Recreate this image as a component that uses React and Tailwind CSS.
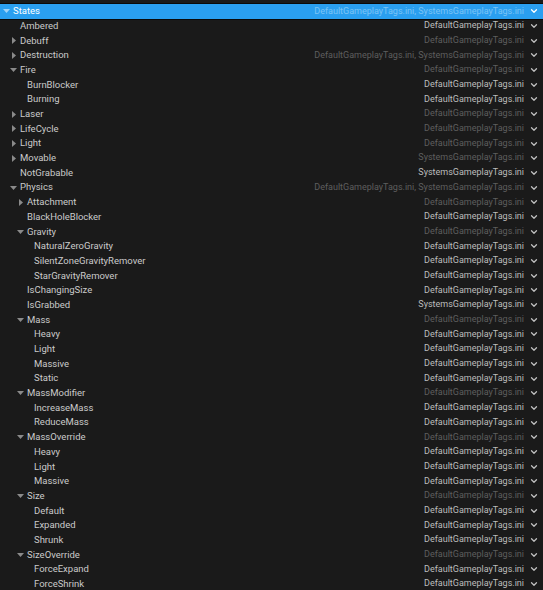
import { ChevronDown } from 'lucide-react';

const D = 'DefaultGameplayTags.ini';
const S = 'SystemsGameplayTags.ini';
const DS = 'DefaultGameplayTags.ini, SystemsGameplayTags.ini';

// [level, name, source, state] state: 'open' | 'closed' | null
const rows = [
  [0, 'States', DS, 'open'],
  [1, 'Ambered', D, null],
  [1, 'Debuff', D, 'closed'],
  [1, 'Destruction', DS, 'closed'],
  [1, 'Fire', D, 'open'],
  [2, 'BurnBlocker', D, null],
  [2, 'Burning', D, null],
  [1, 'Laser', D, 'closed'],
  [1, 'LifeCycle', D, 'closed'],
  [1, 'Light', D, 'closed'],
  [1, 'Movable', S, 'closed'],
  [1, 'NotGrabable', S, null],
  [1, 'Physics', DS, 'open'],
  [2, 'Attachment', D, 'closed'],
  [2, 'BlackHoleBlocker', D, null],
  [2, 'Gravity', D, 'open'],
  [3, 'NaturalZeroGravity', D, null],
  [3, 'SilentZoneGravityRemover', D, null],
  [3, 'StarGravityRemover', D, null],
  [2, 'IsChangingSize', D, null],
  [2, 'IsGrabbed', S, null],
  [2, 'Mass', D, 'open'],
  [3, 'Heavy', D, null],
  [3, 'Light', D, null],
  [3, 'Massive', D, null],
  [3, 'Static', D, null],
  [2, 'MassModifier', D, 'open'],
  [3, 'IncreaseMass', D, null],
  [3, 'ReduceMass', D, null],
  [2, 'MassOverride', D, 'open'],
  [3, 'Heavy', D, null],
  [3, 'Light', D, null],
  [3, 'Massive', D, null],
  [2, 'Size', D, 'open'],
  [3, 'Default', D, null],
  [3, 'Expanded', D, null],
  [3, 'Shrunk', D, null],
  [2, 'SizeOverride', D, 'open'],
  [3, 'ForceExpand', D, null],
  [3, 'ForceShrink', D, null],
];

const indent = ['w-[13px]', 'w-[20px]', 'w-[27px]', 'w-[34px]'];

function Arrow({ state, selected }) {
  if (!state) return null;
  const fill = selected ? '#9fd3f8' : '#8a8a8a';
  return (
    <span className="absolute right-[3px] top-0 h-full flex items-center">
      {state === 'open' ? (
        <svg width="7" height="4" viewBox="0 0 7 4"><path d="M0 0H7L3.5 4Z" fill={fill} /></svg>
      ) : (
        <svg width="4" height="7" viewBox="0 0 4 7" className="mr-[1px]"><path d="M0 0L4 3.5L0 7Z" fill={fill} /></svg>
      )}
    </span>
  );
}

function Row({ row, selected }) {
  const [level, name, source, state] = row;
  const dim = state !== null;
  return (
    <div className={`flex items-center h-[14.7px] ${selected ? 'bg-[#2a9ff0] outline outline-1 outline-[#0a0a0a]' : ''}`}>
      <div className={`relative h-full shrink-0 ${indent[level]}`}>
        <Arrow state={state} selected={selected} />
      </div>
      <span className={`flex-1 whitespace-nowrap text-[9.5px] ${selected ? 'text-white' : 'text-[#cacaca]'}`}>{name}</span>
      <span className={`whitespace-nowrap mr-[5px] text-[9px] ${selected ? 'text-[#7cc4f5]' : dim ? 'text-[#5e5e5e]' : 'text-[#bdbdbd]'}`}>{source}</span>
      <ChevronDown size={10} strokeWidth={3} className={`mr-[4px] ${selected ? 'text-white' : 'text-[#c0c0c0]'}`} />
    </div>
  );
}

export default function App() {
  return (
    <div className="w-[543px] h-[590px] overflow-hidden bg-[#1a1a1a] pt-[4px] font-['Roboto',sans-serif]">
      {rows.map((r, i) => (
        <Row key={i} row={r} selected={i === 0} />
      ))}
    </div>
  );
}
